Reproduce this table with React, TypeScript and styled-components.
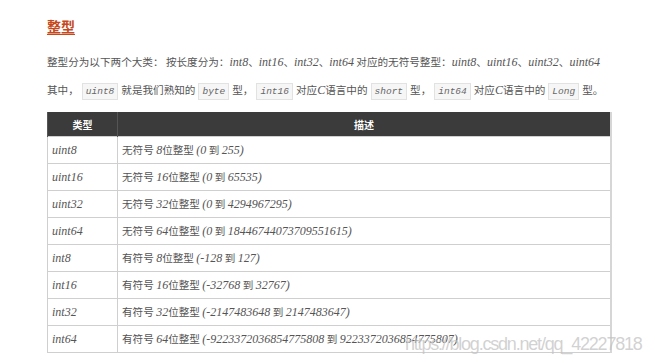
import styled, { createGlobalStyle } from "styled-components";

const GlobalStyle = createGlobalStyle`
  html, body {
    margin: 0;
    padding: 0;
    background: #ffffff;
  }
  body {
    font-family: "Noto Sans CJK SC", "Noto Sans", sans-serif;
  }
`;

const Page = styled.div`
  position: relative;
  width: 655px;
  height: 363px;
  overflow: hidden;
  box-sizing: border-box;
  padding: 18px 0 0 47px;
`;

const Heading = styled.h2`
  margin: 0;
  font-size: 14px;
  line-height: 16px;
  font-weight: 700;
  color: #c6491c;
  text-decoration: underline;
  text-underline-offset: 2px;
`;

const Para = styled.p<{ $top: number }>`
  margin: ${(p) => p.$top}px 0 0 0;
  font-size: 10.6px;
  line-height: 28px;
  color: #555;
  white-space: nowrap;
`;

const Latin = styled.em`
  font-family: "Liberation Serif", serif;
  font-size: 12px;
  font-style: italic;
  color: #555;
`;

const Code = styled.code`
  display: inline-block;
  margin: 0 3px;
  padding: 0 3px;
  height: 15px;
  line-height: 15px;
  vertical-align: middle;
  border: 1px solid #e2e2e2;
  background: #f6f6f6;
  font-family: "Liberation Mono", monospace;
  font-style: italic;
  font-size: 9.5px;
  color: #666;
`;

const Table = styled.table`
  margin-top: 8px;
  width: 565px;
  border-collapse: collapse;
  table-layout: fixed;
  border-right: 2px solid #d6d6d6;
`;

const HeadCell = styled.th<{ $w?: number }>`
  width: ${(p) => (p.$w ? `${p.$w}px` : "auto")};
  height: 24px;
  padding: 0;
  background: #3b3b3b;
  color: #ffffff;
  font-size: 10px;
  font-weight: 700;
  text-align: center;
  border-left: 1px solid #555;
`;

const Cell = styled.td`
  height: 26px;
  padding: 0 0 0 4px;
  border: 1px solid #cfcfcf;
  font-size: 10.6px;
  color: #555;
  white-space: nowrap;
  overflow: hidden;
`;

const Watermark = styled.div`
  position: absolute;
  left: 405px;
  top: 334px;
  font-family: "Liberation Sans", Arial, sans-serif;
  font-size: 18px;
  letter-spacing: -1.2px;
  color: rgba(195, 195, 195, 0.75);
  white-space: nowrap;
  pointer-events: none;
`;

const rows: [string, string, string, string, string][] = [
  ["uint8", "无符号", "8", "(0", "255)"],
  ["uint16", "无符号", "16", "(0", "65535)"],
  ["uint32", "无符号", "32", "(0", "4294967295)"],
  ["uint64", "无符号", "64", "(0", "18446744073709551615)"],
  ["int8", "有符号", "8", "(-128", "127)"],
  ["int16", "有符号", "16", "(-32768", "32767)"],
  ["int32", "有符号", "32", "(-2147483648", "2147483647)"],
  ["int64", "有符号", "64", "(-9223372036854775808", "9223372036854775807)"],
];

export default function App() {
  return (
    <>
      <GlobalStyle />
      <Page>
        <Heading>整型</Heading>
        <Para $top={14}>
          整型分为以下两个大类： 按长度分为：<Latin>int8</Latin>、<Latin>int16</Latin>、
          <Latin>int32</Latin>、<Latin>int64</Latin> 对应的无符号整型：
          <Latin>uint8</Latin>、<Latin>uint16</Latin>、<Latin>uint32</Latin>、
          <Latin>uint64</Latin>
        </Para>
        <Para $top={0}>
          其中，<Code>uint8</Code>就是我们熟知的<Code>byte</Code>型，
          <Code>int16</Code>对应<Latin>C</Latin>语言中的<Code>short</Code>型，
          <Code>int64</Code>对应<Latin>C</Latin>语言中的<Code>Long</Code>型。
        </Para>
        <Table>
          <thead>
            <tr>
              <HeadCell $w={69}>类型</HeadCell>
              <HeadCell>描述</HeadCell>
            </tr>
          </thead>
          <tbody>
            {rows.map(([name, sign, bits, from, to]) => (
              <tr key={name}>
                <Cell>
                  <Latin>{name}</Latin>
                </Cell>
                <Cell>
                  {sign} <Latin>{bits}</Latin>位整型 <Latin>{from}</Latin> 到{" "}
                  <Latin>{to}</Latin>
                </Cell>
              </tr>
            ))}
          </tbody>
        </Table>
        <Watermark>https://blog.csdn.net/qq_42227818</Watermark>
      </Page>
    </>
  );
}
